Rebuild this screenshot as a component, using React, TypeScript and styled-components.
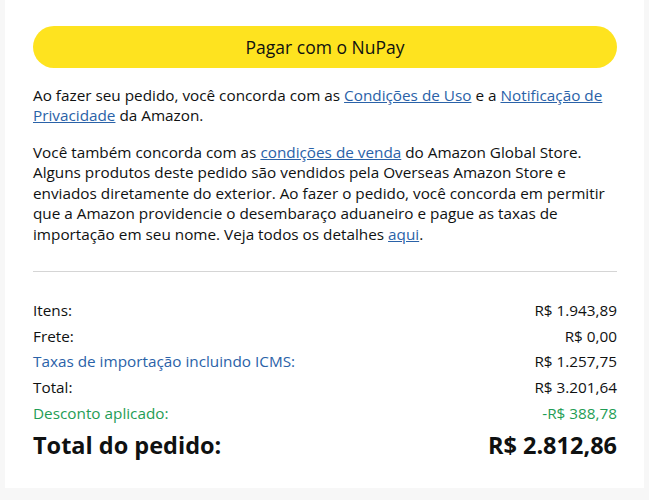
import React from "react";
import styled, { createGlobalStyle } from "styled-components";

const Global = createGlobalStyle`
  html, body { margin: 0; padding: 0; background: #f7f7f7; }
  body { font-family: "Open Sans", "Noto Sans", Arial, sans-serif; color: #0f1111; }
`;

const Page = styled.div`
  width: 649px;
  height: 500px;
  background: #f7f7f7;
  padding-left: 5px;
  box-sizing: border-box;
`;

const Card = styled.div`
  width: 639px;
  height: 488px;
  background: #ffffff;
  box-sizing: border-box;
  padding: 26px 27px 26px 28px;
  display: flex;
  flex-direction: column;
`;

const PayButton = styled.button`
  height: 42px;
  width: 100%;
  border: none;
  border-radius: 21px;
  background: #fee31f;
  font-family: inherit;
  font-size: 17.5px;
  color: #0f1111;
  cursor: pointer;
`;

const Para = styled.p<{ $top: number }>`
  margin: ${(p) => p.$top}px 0 0 0;
  font-size: 15.3px;
  line-height: 20.5px;
`;

const Link = styled.a`
  color: #2a62a8;
  text-decoration: underline;
`;

const Divider = styled.hr`
  border: none;
  height: 1px;
  background: #d5d5d5;
  margin: 27px 0 25px 0;
`;

const Row = styled.div<{ $tone?: "blue" | "green" }>`
  display: flex;
  justify-content: space-between;
  align-items: center;
  height: 26px;
  font-size: 15.3px;
  color: ${(p) => (p.$tone === "green" ? "#1f9d55" : "#0f1111")};
`;

const Label = styled.span<{ $tone?: "blue" | "green" }>`
  color: ${(p) => (p.$tone === "blue" ? "#2a62a8" : "inherit")};
`;

const GrandRow = styled.div`
  display: flex;
  justify-content: space-between;
  align-items: center;
  height: 34px;
  margin-top: 3px;
  font-size: 23.5px;
  font-weight: 700;
  color: #0f1111;
`;

const rows: { label: string; value: string; tone?: "blue" | "green" }[] = [
  { label: "Itens:", value: "R$ 1.943,89" },
  { label: "Frete:", value: "R$ 0,00" },
  { label: "Taxas de importação incluindo ICMS:", value: "R$ 1.257,75", tone: "blue" },
  { label: "Total:", value: "R$ 3.201,64" },
  { label: "Desconto aplicado:", value: "-R$ 388,78", tone: "green" },
];

export default function App() {
  return (
    <>
      <Global />
      <Page>
        <Card>
          <PayButton>Pagar com o NuPay</PayButton>
          <Para $top={17}>
            Ao fazer seu pedido, você concorda com as <Link>Condições de Uso</Link> e a{" "}
            <Link>Notificação de Privacidade</Link> da Amazon.
          </Para>
          <Para $top={16}>
            Você também concorda com as <Link>condições de venda</Link> do Amazon Global Store.
            Alguns produtos deste pedido são vendidos pela Overseas Amazon Store e enviados
            diretamente do exterior. Ao fazer o pedido, você concorda em permitir que a Amazon
            providencie o desembaraço aduaneiro e pague as taxas de importação em seu nome. Veja
            todos os detalhes <Link>aqui</Link>.
          </Para>
          <Divider />
          {rows.map((r) => (
            <Row key={r.label} $tone={r.tone}>
              <Label $tone={r.tone}>{r.label}</Label>
              <span>{r.value}</span>
            </Row>
          ))}
          <GrandRow>
            <span>Total do pedido:</span>
            <span>R$ 2.812,86</span>
          </GrandRow>
        </Card>
      </Page>
    </>
  );
}
